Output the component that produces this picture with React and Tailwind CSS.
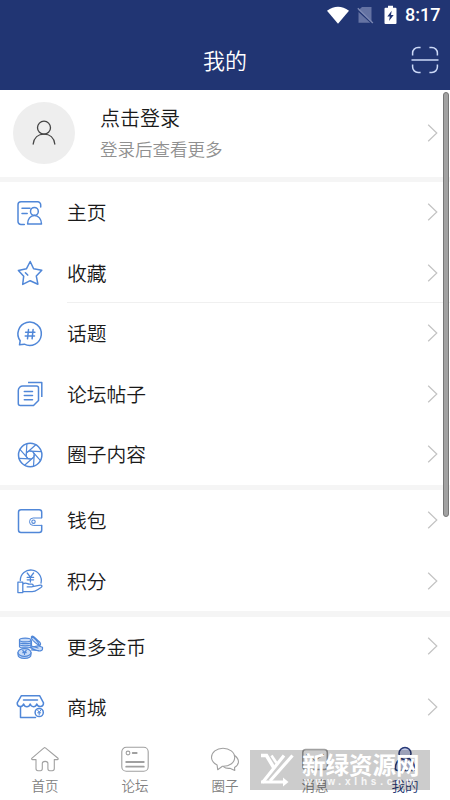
const GROUPS = [
  [
    { label: '主页', icon: HomepageIcon },
    { label: '收藏', icon: StarIcon, line: true },
    { label: '话题', icon: TopicIcon },
    { label: '论坛帖子', icon: PostsIcon },
    { label: '圈子内容', icon: ApertureIcon },
  ],
  [
    { label: '钱包', icon: WalletIcon },
    { label: '积分', icon: PointsIcon },
  ],
  [
    { label: '更多金币', icon: CoinsIcon },
    { label: '商城', icon: ShopIcon },
  ],
];

const TABS = [
  { label: '首页', icon: TabHomeIcon },
  { label: '论坛', icon: TabForumIcon },
  { label: '圈子', icon: TabCircleIcon },
  { label: '消息', icon: TabMessageIcon },
  { label: '我的', icon: TabMineIcon, active: true },
];

function RowIcon({ children }) {
  return (
    <svg
      viewBox="0 0 30 30"
      className="h-[30px] w-[30px] shrink-0"
      fill="none"
      stroke="#5087d8"
      strokeWidth="1.5"
      strokeLinecap="round"
      strokeLinejoin="round"
    >
      {children}
    </svg>
  );
}

function HomepageIcon() {
  return (
    <RowIcon>
      <path d="M25.700 9V6.800a3 3 0 0 0-3-3H6a3 3 0 0 0-3 3v16.700a3 3 0 0 0 3 3h3.300M7 10.300h8M7 15.400h5.200" />
      <circle cx="19.400" cy="13.400" r="3.900" />
      <path d="M12.600 26c0-5 2.800-8.500 6.800-8.500s7.100 3.500 7.100 8.500z" />
    </RowIcon>
  );
}

function StarIcon() {
  return (
    <RowIcon>
      <path d="M15.200 3.500l3.400 7.300 8.200 1.400-5.500 5.900 1.600 8.100-7.700-3.500-7.500 3.700 1-8.200-5.300-5.800 8-1.600zM10.400 14.700l2.300 2.400" />
    </RowIcon>
  );
}

function TopicIcon() {
  return (
    <RowIcon>
      <path d="M4.500 25.800l.7-4.100A11.700 11.700 0 1 1 9.300 25.200z" />
      <path d="M13.500 10.500l-1 9.300M18.100 10.500l-1 9.300M10.600 13.200h9.300M10.200 17h9.300" />
    </RowIcon>
  );
}

function PostsIcon() {
  return (
    <RowIcon>
      <path d="M13 3.500h13.800V18" strokeLinecap="butt" />
      <path d="M8 7h13.500a2 2 0 0 1 2 2v12.500l-5 5H5.300a2 2 0 0 1-2-2V11.500A4.500 4.500 0 0 1 8 7z" />
      <path d="M9.300 12.500h8.200M9.300 16.600h8.200M9.300 20.700h8.200" />
    </RowIcon>
  );
}

function ApertureIcon() {
  return (
    <RowIcon>
      <circle cx="15.200" cy="15" r="11.700" />
      <circle cx="15.200" cy="15" r="4" strokeWidth="1.200" />
      {[0, 45, 90, 135, 180, 225, 270, 315].map((deg) => (
        <path key={deg} d="M12.400 12.200L20.800 4.700" strokeWidth="1.200" transform={`rotate(${deg} 15.200 15)`} />
      ))}
    </RowIcon>
  );
}

function WalletIcon() {
  return (
    <RowIcon>
      <path d="M26.700 11.500V6.200a2.500 2.500 0 0 0-2.500-2.500H6a2.500 2.500 0 0 0-2.500 2.500v17.900a2.500 2.500 0 0 0 2.500 2.500h18.200a2.500 2.500 0 0 0 2.500-2.500v-4.600" />
      <path d="M26.700 12h-8.500a3.700 3.700 0 0 0 0 7.400h8.500" strokeWidth="1" />
      <circle cx="18.500" cy="15.700" r="1.700" strokeWidth="1.100" />
    </RowIcon>
  );
}

function PointsIcon() {
  return (
    <RowIcon>
      <path d="M5.300 14.400A10.500 10.500 0 1 1 26 17M12.200 7l3.200 4.200L18.600 7M15.400 11.200v4.800M12.200 11.400h6.400M12.200 13.800h6.400" strokeWidth="1.300" />
      <path d="M2.900 16.200h4.900v10.400H2.900zM8 18c2.500-2.200 4-.4 6 .2h3c1.800.4 1.600 2.600-.2 2.700h-4.600M17.500 20.700l7.700-1.600c2-.3 2.300 1.400.8 2.400-4.200 2.600-5.500 4.300-9 4.200L8 25.400" strokeWidth="1.300" />
    </RowIcon>
  );
}

function CoinsIcon() {
  return (
    <RowIcon>
      <g strokeWidth="1.200" fill="#c9dcf8">
        <path d="M4.500 8.200v6.500c0 1.600 11.500 1.600 11.500 0V8.200M4.500 10.400c0 1.600 11.500 1.600 11.500 0M4.500 12.600c0 1.600 11.500 1.600 11.500 0" />
        <ellipse cx="10.200" cy="8" rx="5.800" ry="1.900" />
        <path d="M14.700 15.500l8.500 3.500c3 .1 4.300-.6 4.300-2v-1.800l-4.500-1.400zM16.500 17.800l7 .9" />
        <path d="M16.400 4.800c1.100-1.600 2.400-.5 8.600 5.700 1.200 1.700.3 3.500-1 2.900-4.500-3-8.500-6.300-7.600-8.600zM17 5.100c1.600 0 6 4.100 7.200 7.900" />
        <path d="M16.500 9v5l6.500 2" fill="none" />
        <path d="M3 20.500v2.100c0 5.100 13 5.100 13 0v-2.100" />
        <ellipse cx="9.500" cy="20.500" rx="6.500" ry="3.800" />
        <path d="M7.800 18.500l1.700 2 1.700-2M9.500 20.500v2M7.800 20.700h3.400" fill="none" />
      </g>
    </RowIcon>
  );
}

function ShopIcon() {
  return (
    <RowIcon>
      <path d="M6.400 3.700h18.200l3.900 7.200c0 4.600-5.500 4.700-6.700 1-1.200 3.700-5.500 3.700-6.600 0-1.200 3.700-5.400 3.700-6.600 0-1.200 3.700-6.400 3.600-6.400-1zM8.500 8.100h14M5.500 14.500v11h15" />
      <circle cx="24.200" cy="20.500" r="4.100" />
      <path d="M22.700 18.300l1.500 1.900 1.500-1.900M24.200 20.200v2.700M22.700 20.800h3" strokeWidth="1" />
    </RowIcon>
  );
}

function TabIcon({ children }) {
  return (
    <svg
      viewBox="0 0 30 30"
      className="h-[30px] w-[30px]"
      fill="none"
      stroke="#a0a0a0"
      strokeWidth="1.100"
      strokeLinecap="round"
      strokeLinejoin="round"
    >
      {children}
    </svg>
  );
}

function TabHomeIcon() {
  return (
    <TabIcon>
      <path d="M14 3.900a1 1 0 0 1 1.400 0L28 14.200c.5.700.1 1.400-.7 1.400h-3v9c0 1.600-1 2.100-2.100 2.100h-2.500c-1.200 0-1.800-.7-1.800-2.100v-5.100c0-2.900-5.600-2.900-5.600 0v5.100c0 1.400-.7 2.100-1.800 2.100H8c-1.200 0-2-.7-2-2.100v-9H2.600c-1 0-1.300-.8-.6-1.500z" />
    </TabIcon>
  );
}

function TabForumIcon() {
  return (
    <TabIcon>
      <rect x="1.800" y="3.200" width="26.400" height="24" rx="4.500" />
      <circle cx="8" cy="9" r="1.900" />
      <path d="M12.700 9h4M6.200 18h17.600M6.200 22.700h17.600" strokeWidth="1.800" />
    </TabIcon>
  );
}

function TabCircleIcon() {
  return (
    <TabIcon>
      <path d="M7.700 25.700l-.6-4.600C3.700 19.200 1.500 16.500 1.500 13.300 1.500 8.200 6.600 4.200 13 4.200s11.700 4 11.700 9.100c0 5.700-5.500 9.300-12.300 9z" />
      <path d="M24.300 11.200c5.800 4.100 5.200 9.300.2 12.300l.3 2.900-4.900-2.100c-2.900.3-4.800-.2-6.500-1.700" />
    </TabIcon>
  );
}

function TabMessageIcon() {
  return (
    <TabIcon>
      <rect x="2.800" y="5.500" width="24.500" height="20" rx="3" strokeWidth="1.500" />
      <path d="M6.500 10.500l8.500 6 8.500-6" />
    </TabIcon>
  );
}

function TabMineIcon() {
  return (
    <TabIcon>
      <g stroke="#293a78" fill="#c4cae6" strokeWidth="1.500">
        <path d="M10.700 14.700C7 17 5.300 20.500 5.300 24.300c0 1.600.8 2.200 2.300 2.200h15c1.500 0 2.200-.8 2.100-2.200-.1-4-1.900-7.300-5.400-9.600z" />
        <circle cx="15" cy="9.500" r="6" />
      </g>
    </TabIcon>
  );
}

function Chevron() {
  return (
    <svg viewBox="0 0 12 20" className="mr-[11px] h-5 w-3 shrink-0" fill="none" stroke="#c3c3c3" strokeWidth="1.200">
      <path d="M1.200 1.700l8.600 8.300-8.600 8.300" />
    </svg>
  );
}

function Header() {
  return (
    <header className="h-[90px] shrink-0 bg-[#213573] text-white">
      <div className="flex h-[30px] items-center justify-end pr-[10px]">
        <svg viewBox="0 0 22 18" className="mr-[8px] h-[18px] w-[22px]" fill="#fff">
          <path d="M0 4.800Q11-3.400 22 4.800L11 17.700z" />
        </svg>
        <svg viewBox="0 0 17 18" className="mr-[10px] h-[18px] w-[17px]">
          <path d="M5 1h9.500v14.500L1.500 4.300zM1.500 6v10.800h11.800z" fill="#6573a3" />
          <path d="M.8 2.300l15 14.600" stroke="#7c88b3" strokeWidth="1.400" />
        </svg>
        <svg viewBox="0 0 13 20" className="mr-[8px] h-[20px] w-[13px]">
          <path d="M4 .8h5v2h2.500q1 0 1 1V18q0 1-1 1h-10q-1 0-1-1V3.800q0-1 1-1H4z" fill="#fff" />
          <path d="M7.700 5.800L3.300 11.500h2.500L5 16l4.700-6H7z" fill="#213573" />
        </svg>
        <span className="w-[35px] whitespace-nowrap font-[Roboto] text-[18px] font-medium leading-none">8:17</span>
      </div>
      <div className="grid h-[60px] grid-cols-[1fr_auto_1fr] items-center">
        <h1 className="col-start-2 pb-[3px] text-[22px] font-[350] leading-none">我的</h1>
        <svg viewBox="0 0 28 28" className="mr-[11px] h-7 w-7 justify-self-end" fill="none" stroke="#ccd9f7" strokeWidth="1.500">
          <path d="M1.600 9.500V7a5.500 5.500 0 0 1 5.500-5.500h2.500M18.400 1.500h2.500A5.500 5.500 0 0 1 26.400 7v2.500M1.600 18.500V21a5.500 5.500 0 0 0 5.500 5.500h2.500M18.400 26.500h2.500a5.500 5.500 0 0 0 5.500-5.500v-2.500M.5 14h27" />
        </svg>
      </div>
    </header>
  );
}

function Profile() {
  return (
    <div className="flex h-[87px] shrink-0 items-center pb-[1px] pl-[13px]">
      <div className="flex h-[62px] w-[62px] items-center justify-center rounded-full bg-[#eeeeee]">
        <svg viewBox="0 0 24 26" className="h-[26px] w-6" fill="none" stroke="#444" strokeWidth="1.300" strokeLinecap="round">
          <circle cx="12" cy="7.700" r="6.500" />
          <path d="M1.200 24c.8-6 5-9.800 10.800-9.800S22 18 22.800 24" />
        </svg>
      </div>
      <div className="ml-[25px] flex-1 pt-[2px]">
        <p className="text-[20px] font-[350] leading-[30px] text-[#1a1a1a]">点击登录</p>
        <p className="text-[17.500px] font-[350] leading-[32px] text-[#909090]">登录后查看更多</p>
      </div>
      <Chevron />
    </div>
  );
}

function Watermark() {
  return (
    <div className="absolute left-[250px] top-[750px] flex h-10 w-[180px] bg-black/20 text-white">
      <svg viewBox="0 0 52 40" className="h-10 w-[52px] shrink-0" fill="none" stroke="#fff">
        <path d="M11 5.500h5.500L24 18" strokeWidth="3.600" />
        <path d="M21.500 5.500l5 7.500" strokeWidth="2.600" />
        <path d="M34 5.500L12.500 32.500M42.500 5.500L20 31" strokeWidth="3.200" />
        <path d="M11 32h24" strokeWidth="3" />
        <path d="M33 27.500l5.500 4.500-5.500 4.500z" fill="#fff" stroke="none" />
      </svg>
      <div className="flex flex-col">
        <span className="mt-[2px] whitespace-nowrap text-[23.500px] font-bold leading-[24px]">新绿资源网</span>
        <span className="mt-px whitespace-nowrap pl-[2px] font-['Liberation_Sans'] text-[10px] font-bold leading-[10px] tracking-[3.800px] text-white/85">www.xlhs.com</span>
      </div>
    </div>
  );
}

export default function App() {
  return (
    <div className="relative flex h-[800px] w-[450px] flex-col overflow-hidden bg-white font-['Noto_Sans_CJK_SC',sans-serif]">
      <Header />
      <main className="flex min-h-0 flex-1 flex-col overflow-hidden">
        <Profile />
        {GROUPS.map((rows, i) => (
          <section key={i} className="shrink-0 bg-[#f5f5f5] pt-[5.400px]">
            {rows.map(({ label, icon: Icon, line }) => (
              <div key={label} className="flex h-[60.500px] items-center bg-white pl-[15px]">
                <Icon />
                <div className={`ml-[22px] flex h-full flex-1 items-center justify-between border-b ${line ? 'border-[#f0f0f0]' : 'border-transparent'}`}>
                  <span className="text-[19.800px] font-[350] leading-none text-[#1a1a1a]">{label}</span>
                  <Chevron />
                </div>
              </div>
            ))}
          </section>
        ))}
      </main>
      <nav className="grid h-[62px] shrink-0 grid-cols-5 bg-white pt-[6px]">
        {TABS.map(({ label, icon: Icon, active }) => (
          <div key={label} className="flex flex-col items-center">
            <Icon />
            <span className={`mt-[3px] text-[13.500px] font-[350] leading-[16px] ${active ? 'text-[#213573]' : 'text-[#808080]'}`}>{label}</span>
          </div>
        ))}
      </nav>
      <div className="absolute left-[443px] top-[92px] h-[425px] w-[6px] rounded-full border border-[#777] bg-[#a2a2a2]" />
      <Watermark />
    </div>
  );
}
